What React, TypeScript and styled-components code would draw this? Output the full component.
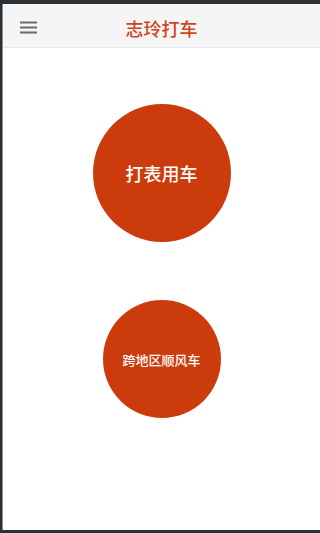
import React from "react";
import styled, { createGlobalStyle } from "styled-components";

const Global = createGlobalStyle`
  html, body { margin: 0; padding: 0; background: #ffffff; }
  * { box-sizing: border-box; }
  body { font-family: "Noto Sans CJK SC", "Noto Sans", sans-serif; }
`;

const Frame = styled.div`
  width: 320px;
  height: 533px;
  background: #2a3136;
  padding: 4px 0 3px 2px;
  display: flex;
`;

const Screen = styled.div`
  flex: 1;
  background: #ffffff;
  display: flex;
  flex-direction: column;
  border-left: 1px solid #8a8f92;
`;

const Header = styled.header`
  height: 44px;
  background: #f5f5f5;
  border-bottom: 1px solid #e6e6e6;
  display: grid;
  grid-template-columns: 60px 1fr 60px;
  align-items: center;
`;

const MenuButton = styled.button`
  border: 0;
  background: transparent;
  padding: 2px 0 0 17px;
  height: 44px;
  display: flex;
  align-items: center;
`;

const Title = styled.h1`
  margin: 0;
  padding-top: 4px;
  text-align: center;
  font-size: 18px;
  font-weight: 500;
  color: #d2441a;
`;

const Content = styled.main`
  flex: 1;
  display: flex;
  flex-direction: column;
  align-items: center;
  padding-top: 56px;
  gap: 58px;
`;

const Circle = styled.button<{ $size: number; $font: number }>`
  width: ${(p) => p.$size}px;
  height: ${(p) => p.$size}px;
  border-radius: 50%;
  border: 0;
  background: #cc3b0c;
  color: #ffffff;
  font-family: "Noto Sans CJK SC", "Noto Sans", sans-serif;
  font-size: ${(p) => p.$font}px;
  font-weight: 500;
  display: flex;
  align-items: center;
  justify-content: center;
  padding: 0;
`;

export default function App() {
  return (
    <>
      <Global />
      <Frame>
        <Screen>
          <Header>
            <MenuButton aria-label="menu">
              <svg width="17" height="13" viewBox="0 0 17 13">
                <rect x="0" y="0.5" width="17" height="2" fill="#6b6b6b" />
                <rect x="0" y="5.5" width="17" height="2" fill="#6b6b6b" />
                <rect x="0" y="10.5" width="17" height="2" fill="#6b6b6b" />
              </svg>
            </MenuButton>
            <Title>志玲打车</Title>
            <span />
          </Header>
          <Content>
            <Circle $size={138} $font={18}>打表用车</Circle>
            <Circle $size={118} $font={13}>跨地区顺风车</Circle>
          </Content>
        </Screen>
      </Frame>
    </>
  );
}
